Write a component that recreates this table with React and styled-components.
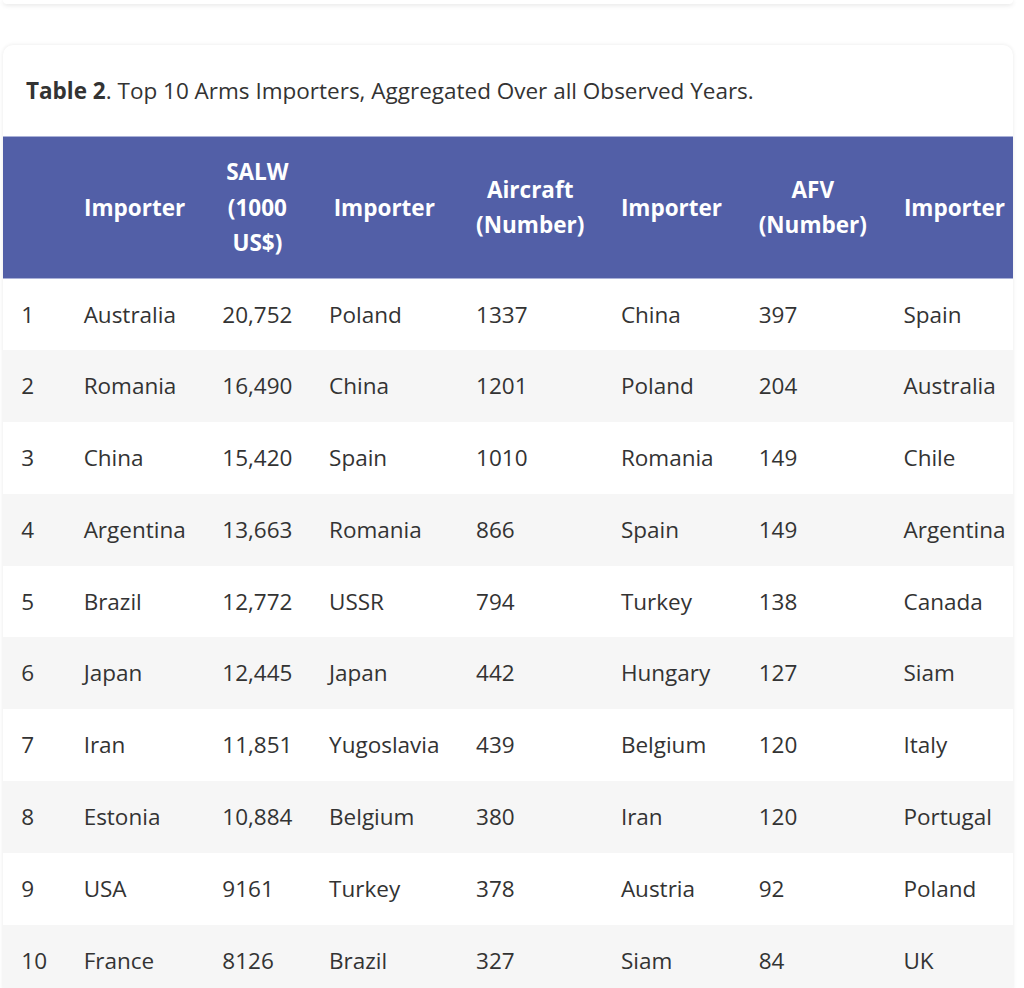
import styled, { createGlobalStyle } from 'styled-components'

const GlobalStyle = createGlobalStyle`
  body {
    margin: 0;
    background: #fff;
    font-family: "Open Sans", "Liberation Sans", sans-serif;
    color: #333;
  }
`

const Page = styled.div`
  display: flex;
  flex-direction: column;
  gap: 41px;
  padding: 0 11px 0 3px;
`

const PrevCard = styled.div`
  height: 4px;
  background: #fff;
  border-radius: 0 0 10px 10px;
  box-shadow: 0 1px 5px rgba(0, 0, 0, 0.12);
`

const Card = styled.div`
  background: #fff;
  border-radius: 10px;
  box-shadow: 0 0 4px rgba(0, 0, 0, 0.09);
  overflow: hidden;
`

const Caption = styled.p`
  margin: 0;
  padding: 31px 23px 30px;
  font-size: 22.5px;
  line-height: 30px;
  color: #333;
  b {
    font-weight: 700;
  }
`

const Table = styled.table`
  border-collapse: collapse;
  font-size: 22.5px;
  white-space: nowrap;
`

const Head = styled.thead`
  background: #525fa7;
  tr {
    border-top: 1px solid #aab1d8;
    border-bottom: 1px solid #aab1d8;
  }
`

const Th = styled.th`
  padding: 17px 18.3px 17px;
  font-weight: 700;
  line-height: 35.5px;
  color: #fff;
  text-align: center;
  white-space: normal;
`

const Row = styled.tr`
  background: ${p => (p.$odd ? '#f6f6f6' : '#fff')};
`

const Td = styled.td`
  padding: 18px 18.3px;
  line-height: 35.8px;
  color: #333;
  text-align: left;
`

const heads = [
  '',
  'Importer',
  <>SALW<br />(1000<br />US$)</>,
  'Importer',
  <>Aircraft<br />(Number)</>,
  'Importer',
  <>AFV<br />(Number)</>,
  'Importer',
]

const rows = [
  ['1', 'Australia', '20,752', 'Poland', '1337', 'China', '397', 'Spain'],
  ['2', 'Romania', '16,490', 'China', '1201', 'Poland', '204', 'Australia'],
  ['3', 'China', '15,420', 'Spain', '1010', 'Romania', '149', 'Chile'],
  ['4', 'Argentina', '13,663', 'Romania', '866', 'Spain', '149', 'Argentina'],
  ['5', 'Brazil', '12,772', 'USSR', '794', 'Turkey', '138', 'Canada'],
  ['6', 'Japan', '12,445', 'Japan', '442', 'Hungary', '127', 'Siam'],
  ['7', 'Iran', '11,851', 'Yugoslavia', '439', 'Belgium', '120', 'Italy'],
  ['8', 'Estonia', '10,884', 'Belgium', '380', 'Iran', '120', 'Portugal'],
  ['9', 'USA', '9161', 'Turkey', '378', 'Austria', '92', 'Poland'],
  ['10', 'France', '8126', 'Brazil', '327', 'Siam', '84', 'UK'],
]

const App = () => {
  return (
    <Page>
      <GlobalStyle />
      <PrevCard />
      <Card>
        <Caption>
          <b>Table 2</b>. Top 10 Arms Importers, Aggregated Over all Observed Years.
        </Caption>
        <Table>
          <Head>
            <tr>
              {heads.map((h, i) => (
                <Th key={i}>{h}</Th>
              ))}
            </tr>
          </Head>
          <tbody>
            {rows.map((r, i) => (
              <Row key={r[0]} $odd={i % 2 === 1}>
                {r.map((c, j) => (
                  <Td key={j}>{c}</Td>
                ))}
              </Row>
            ))}
          </tbody>
        </Table>
      </Card>
    </Page>
  )
}

export default App
